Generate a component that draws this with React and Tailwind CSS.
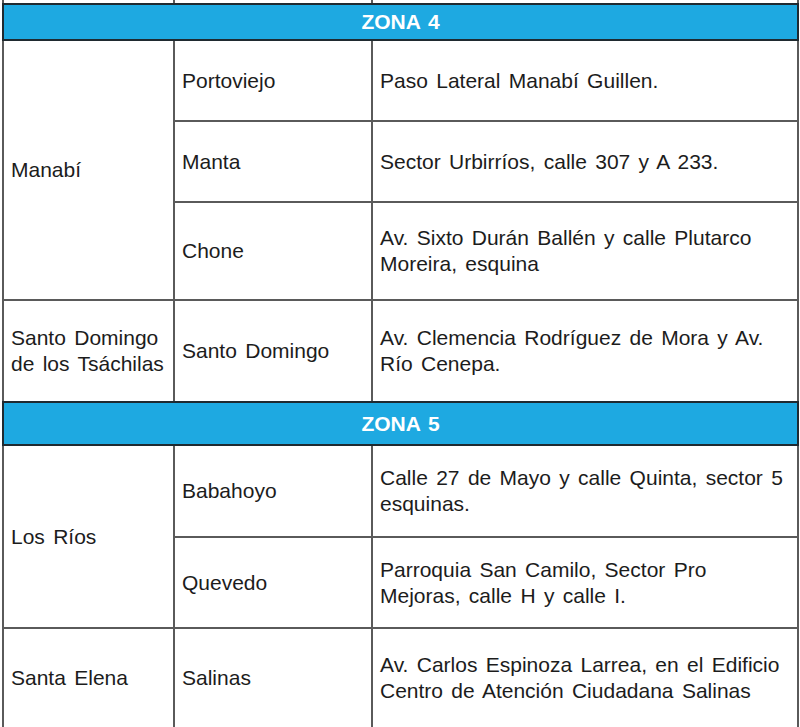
const Cell = ({ children, className = "" }) => (
  <div className={`bg-white flex items-center px-[7px] whitespace-nowrap ${className}`}>
    {children}
  </div>
);

const Zone = ({ label }) => (
  <div className="col-span-3 relative z-10 bg-[#1ea9e1] shadow-[0_0_0_2px_#1f2a30] flex items-center justify-center text-white font-bold text-[21px] [word-spacing:2px]">
    {label}
  </div>
);

export default function App() {
  return (
    <div
      className="w-[800px] h-[727px] overflow-hidden bg-white text-[#1c1c1c] text-[21px] leading-[26px] [word-spacing:2.5px]"
      style={{ fontFamily: '"Liberation Sans", Arial, sans-serif' }}
    >
      <div className="ml-[2px] w-[797px] bg-[#5a5a5a] px-[2px] grid grid-cols-[169px_196px_424px] gap-[2px] grid-rows-[3px_34px_79px_79px_96px_100px_41px_90px_89px_98px]">
        {/* Partial row from above */}
        <div className="bg-white" />
        <div className="bg-white" />
        <div className="bg-white" />

        {/* Zona 4 */}
        <Zone label="ZONA 4" />

        <Cell className="row-span-3">Manabí</Cell>
        <Cell>Portoviejo</Cell>
        <Cell>Paso Lateral Manabí Guillen.</Cell>
        <Cell>Manta</Cell>
        <Cell>Sector Urbirríos, calle 307 y A 233.</Cell>
        <Cell>Chone</Cell>
        <Cell>
          Av. Sixto Durán Ballén y calle Plutarco
          <br />
          Moreira, esquina
        </Cell>

        <Cell>
          Santo Domingo
          <br />
          de los Tsáchilas
        </Cell>
        <Cell>Santo Domingo</Cell>
        <Cell>
          Av. Clemencia Rodríguez de Mora y Av.
          <br />
          Río Cenepa.
        </Cell>

        {/* Zona 5 */}
        <Zone label="ZONA 5" />

        <Cell className="row-span-2">Los Ríos</Cell>
        <Cell>Babahoyo</Cell>
        <Cell>
          Calle 27 de Mayo y calle Quinta, sector 5
          <br />
          esquinas.
        </Cell>
        <Cell>Quevedo</Cell>
        <Cell>
          Parroquia San Camilo, Sector Pro
          <br />
          Mejoras, calle H y calle I.
        </Cell>

        <Cell>Santa Elena</Cell>
        <Cell>Salinas</Cell>
        <Cell>
          Av. Carlos Espinoza Larrea, en el Edificio
          <br />
          Centro de Atención Ciudadana Salinas
        </Cell>
      </div>
    </div>
  );
}
